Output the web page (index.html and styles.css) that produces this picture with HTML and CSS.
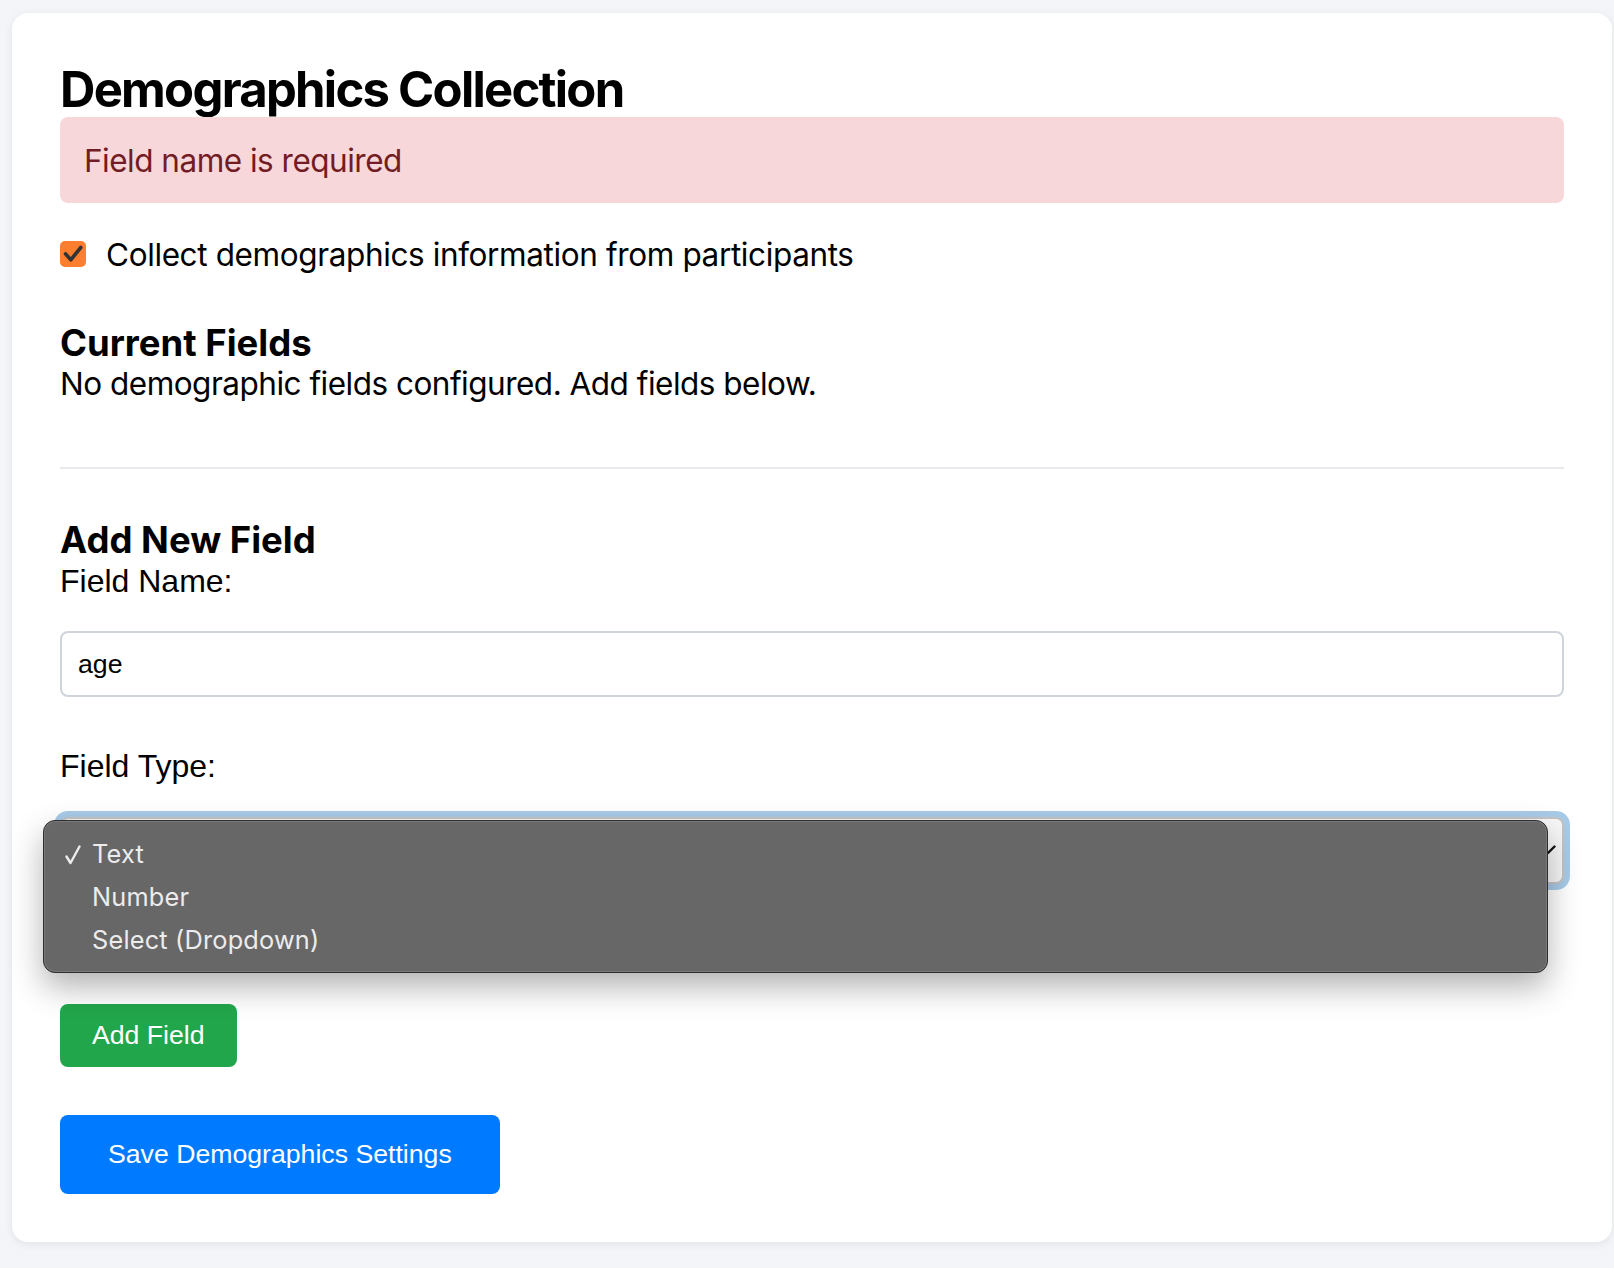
FILE: index.html
```html
<!DOCTYPE html>
<html lang="en">
<head>
<meta charset="utf-8">
<title>Demographics Collection</title>
<link rel="stylesheet" href="styles.css">
</head>
<body>
<main class="card">
  <h2 class="title">Demographics Collection</h2>
  <div class="alert" role="alert">Field name is required</div>
  <label class="check-row">
    <span class="checkbox" aria-hidden="true">
      <svg width="26" height="26" viewBox="0 0 26 26"><polyline points="5.5,12.8 10.8,18.8 20.8,6.5" fill="none" stroke="#333" stroke-width="3.6" stroke-linecap="round" stroke-linejoin="round"/></svg>
    </span>
    <span class="check-text">Collect demographics information from participants</span>
  </label>

  <h3 class="section-title">Current Fields</h3>
  <p class="muted">No demographic fields configured. Add fields below.</p>

  <hr class="divider">

  <h3 class="section-title add">Add New Field</h3>
  <label class="field-label" for="fname">Field Name:</label>
  <input id="fname" class="text-input" type="text" value="age">

  <label class="field-label type" for="ftype">Field Type:</label>
  <div class="select-wrap">
    <select id="ftype" class="select">
      <option>Text</option>
      <option>Number</option>
      <option>Select (Dropdown)</option>
    </select>
    <svg class="chevron" width="16" height="10" viewBox="0 0 16 10"><path d="M1.5 1.5 L8 8 L14.5 1.5" fill="none" stroke="#111" stroke-width="2.4" stroke-linecap="round" stroke-linejoin="round"/></svg>
    <ul class="listbox" role="listbox">
      <li class="option selected" role="option">
        <svg class="tick" width="16" height="20" viewBox="0 0 16 20"><polyline points="1.5,11.5 5.5,18 14.5,1.5" fill="none" stroke="#ececec" stroke-width="2.4" stroke-linecap="round" stroke-linejoin="round"/></svg>
        Text
      </li>
      <li class="option" role="option">Number</li>
      <li class="option" role="option">Select (Dropdown)</li>
    </ul>
  </div>

  <button class="btn btn-green" type="button">Add Field</button>
  <button class="btn btn-blue" type="button">Save Demographics Settings</button>
</main>
</body>
</html>
```

FILE: styles.css
```css
html {
  background: #f4f5f9;
}

body {
  margin: 0;
  padding: 13px 0 26px 12px;
  font-family: Inter, "Noto Sans", sans-serif;
  color: #000;
}

.card {
  box-sizing: border-box;
  width: 1600px;
  background: #fff;
  border-radius: 16px;
  box-shadow: 0 2px 10px rgba(0, 0, 0, 0.08);
  padding: 48px;
  display: flex;
  flex-direction: column;
  align-items: stretch;
}

.title {
  margin: 0;
  padding-top: 2px;
  font-size: 49px;
  line-height: 54px;
  font-weight: 700;
  letter-spacing: -1.73px;
}

.alert {
  padding: 25px 24px 23px;
  font-size: 31.5px;
  line-height: 37.7px;
  background: #f8d7da;
  color: #721c24;
  border-radius: 8px;
  letter-spacing: -0.5px;
}

.check-row {
  margin-top: 32px;
  display: flex;
  align-items: center;
  gap: 20px;
  font-size: 31.5px;
  line-height: 38px;
  letter-spacing: -0.38px;
}

.check-text {
  padding-top: 2px;
  line-height: 36px;
}

.checkbox {
  width: 26px;
  height: 26px;
  flex: none;
  border-radius: 5px;
  background: #fd7e2e;
  display: flex;
}

.section-title {
  margin: 50.6px 0 0;
  font-size: 36.5px;
  line-height: 41px;
  font-weight: 700;
  letter-spacing: 0;
}

.section-title.add {
  margin-top: 51.2px;
}

.muted {
  margin: 0;
  padding-top: 2px;
  font-size: 31.5px;
  line-height: 36px;
  letter-spacing: -0.5px;
}

.divider {
  margin: 64.4px 0 0;
  border: 0;
  height: 2px;
  background: #e8eaed;
}

.field-label {
  display: block;
  padding-top: 2px;
  font-family: "Liberation Sans", Arial, sans-serif;
  font-size: 32px;
  line-height: 36px;
}

.field-label.type {
  margin-top: 48.6px;
}

.text-input {
  margin-top: 32.4px;
  height: 66px;
  box-sizing: border-box;
  border: 2px solid #ced4da;
  border-radius: 8px;
  padding: 0 16px;
  font-family: "Liberation Sans", Arial, sans-serif;
  font-size: 26.67px;
  color: #000;
  background: #fff;
}

.select-wrap {
  position: relative;
  margin-top: 33px;
  height: 67px;
}

.select {
  appearance: none;
  -webkit-appearance: none;
  display: block;
  width: 100%;
  height: 67px;
  box-sizing: border-box;
  border: 2px solid #c4c4c4;
  border-radius: 8px;
  background: #f7f7f7;
  box-shadow: 0 0 0 6px #a8cbe8;
  padding: 0 16px;
  font-family: "Liberation Sans", Arial, sans-serif;
  font-size: 26.67px;
  color: #000;
}

.chevron {
  position: absolute;
  right: 8px;
  top: 28px;
}

.listbox {
  position: absolute;
  top: 3px;
  left: -17px;
  width: 1505px;
  box-sizing: border-box;
  margin: 0;
  padding: 11px 0 10px;
  list-style: none;
  background: #676767;
  border: 1px solid #2e2e2e;
  border-radius: 12px;
  box-shadow: 0 14px 32px rgba(0, 0, 0, 0.3), inset 0 0 0 1px rgba(255, 255, 255, 0.12);
  font-family: Inter, "Noto Sans", sans-serif;
  font-size: 25.3px;
  line-height: 43.3px;
  color: #ececec;
  letter-spacing: 0.2px;
}

.option {
  position: relative;
  padding-left: 48px;
}

.tick {
  position: absolute;
  left: 20.5px;
  top: 13px;
}

.btn {
  align-self: flex-start;
  border: 0;
  color: #fff;
  font-family: "Liberation Sans", Arial, sans-serif;
  font-size: 26.67px;
  line-height: 30.7px;
  border-radius: 8px;
  cursor: pointer;
}

.btn-green {
  margin-top: 120.4px;
  padding: 16px 32px;
  background: #22a64b;
}

.btn-blue {
  margin-top: 48.3px;
  padding: 24px 48px;
  background: #007bff;
}
```
